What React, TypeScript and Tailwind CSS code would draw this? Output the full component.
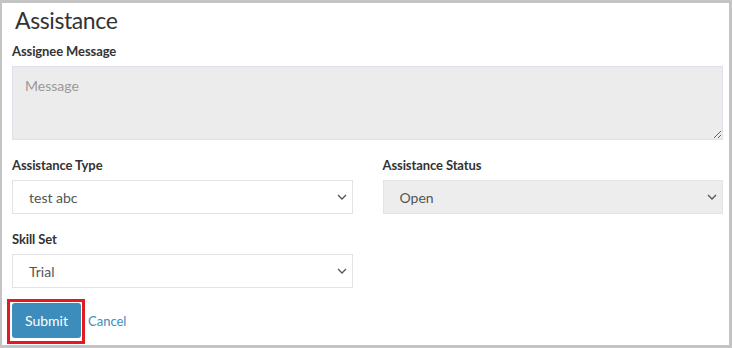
import { useState } from "react";

function Chevron() {
  return (
    <svg
      className="pointer-events-none absolute right-[6px] top-1/2 -translate-y-1/2"
      width="10"
      height="6"
      viewBox="0 0 10 6"
      fill="none"
    >
      <path d="M1 1l4 4 4-4" stroke="#555" strokeWidth="1.3" />
    </svg>
  );
}

function Select({
  value,
  options,
  disabled,
}: {
  value: string;
  options: string[];
  disabled?: boolean;
}) {
  const [v, setV] = useState(value);
  return (
    <div className="relative">
      <select
        value={v}
        disabled={disabled}
        onChange={(e) => setV(e.target.value)}
        className={`block h-[34px] w-full appearance-none border border-[#e3e3e3] pl-[16px] text-[14px] text-[#555] outline-none ${
          disabled ? "bg-[#ededed]" : "bg-white"
        }`}
      >
        {options.map((o) => (
          <option key={o}>{o}</option>
        ))}
      </select>
      <Chevron />
    </div>
  );
}

export default function App() {
  const [mensaje, setMensaje] = useState("");

  return (
    <div
      className="h-[348px] w-[732px] border-t-[3px] border-r-[3px] border-b-[3px] border-l-2 border-[#c4c4c4] bg-white pr-[6px] pl-[10px] text-[#333]"
      style={{ fontFamily: "Lato, 'Open Sans', sans-serif" }}
    >
      <h1 className="h-[38px] pl-[3px] pt-[1px] text-[23px] leading-[32px] font-normal tracking-[-0.4px]">
        Assistance
      </h1>

      <form onSubmit={(e) => e.preventDefault()}>
        <div className="mb-[15px]">
          <label className="mb-[5px] block text-[13px] leading-[20px] font-bold tracking-[-0.1px]">
            Assignee Message
          </label>
          <textarea
            value={mensaje}
            onChange={(e) => setMensaje(e.target.value)}
            placeholder="Message"
            disabled
            className="block h-[74px] w-full border border-[#e0e0e8] bg-[#ececec] px-[12px] py-[8px] text-[14px] text-[#555] outline-none placeholder:text-[#999]"
          />
        </div>

        <div className="grid grid-cols-2 gap-x-[30px]">
          <div className="mb-[15px]">
            <label className="mb-[5px] block text-[13px] leading-[20px] font-bold tracking-[-0.1px]">
              Assistance Type
            </label>
            <Select value="test abc" options={["test abc", "Other"]} />
          </div>
          <div className="mb-[15px]">
            <label className="mb-[5px] block text-[13px] leading-[20px] font-bold tracking-[-0.1px]">
              Assistance Status
            </label>
            <Select value="Open" options={["Open", "Closed"]} disabled />
          </div>
          <div className="mb-[15px]">
            <label className="mb-[5px] block text-[13px] leading-[20px] font-bold tracking-[-0.1px]">
              Skill Set
            </label>
            <Select value="Trial" options={["Trial", "Advanced"]} />
          </div>
        </div>

        <div className="-mt-[4px] -ml-[5px] flex items-center">
          <div className="border-[3px] border-[#e21b23] pt-[1px] pr-[1px] pb-[3px] pl-[2px]">
            <button className="block h-[35px] w-[69px] rounded-[3px] bg-[#3c8dbc] text-[14px] text-white">
              Submit
            </button>
          </div>
          <a href="#" className="ml-[3px] text-[13px] text-[#3c8dbc]">
            Cancel
          </a>
        </div>
      </form>
    </div>
  );
}
